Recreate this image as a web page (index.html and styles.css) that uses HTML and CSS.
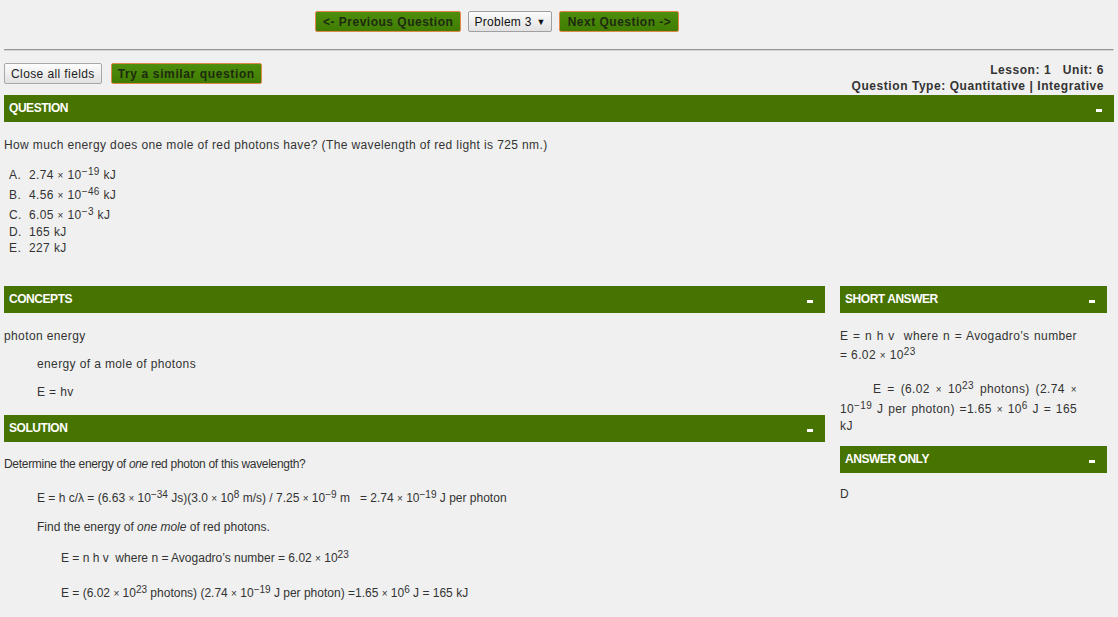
FILE: index.html
```html
<!DOCTYPE html>
<html>
<head>
<meta charset="utf-8">
<link rel="stylesheet" href="styles.css">
</head>
<body>
<div class="page">
  <div class="nav">
    <button class="gbtn">&lt;- Previous Question</button>
    <button class="sel">Problem 3 <span class="arrow">&#9660;</span></button>
    <button class="gbtn next">Next Question -&gt;</button>
  </div>
  <div class="rule"></div>
  <div class="toolbar">
    <div class="tools">
      <button class="btn">Close all fields</button>
      <button class="gbtn try">Try a similar question</button>
    </div>
    <div class="info">
      <div>Lesson: 1&nbsp;&nbsp; Unit: 6</div>
      <div>Question Type: Quantitative | Integrative</div>
    </div>
  </div>

  <section class="panel">
    <div class="phead"><span>QUESTION</span><i class="minus"></i></div>
    <div class="pbody qbody">
      <p class="qtext">How much energy does one mole of red photons have? (The wavelength of red light is 725 nm.)</p>
      <ol class="opts">
        <li><span class="lt">A.</span>2.74 <span class="x">×</span> 10<sup>−19</sup> kJ</li>
        <li><span class="lt">B.</span>4.56 <span class="x">×</span> 10<sup>−46</sup> kJ</li>
        <li><span class="lt">C.</span>6.05 <span class="x">×</span> 10<sup>−3</sup> kJ</li>
        <li><span class="lt">D.</span>165 kJ</li>
        <li><span class="lt">E.</span>227 kJ</li>
      </ol>
    </div>
  </section>

  <div class="cols">
    <div class="left">
      <section class="panel">
        <div class="phead"><span>CONCEPTS</span><i class="minus"></i></div>
        <div class="pbody concepts">
          <p>photon energy</p>
          <p class="in1">energy of a mole of photons</p>
          <p class="in1">E = hv</p>
        </div>
      </section>
      <section class="panel">
        <div class="phead"><span>SOLUTION</span><i class="minus"></i></div>
        <div class="pbody solution">
          <p class="tight">Determine the energy of <em>one</em> red photon of this wavelength?</p>
          <p class="in1 eq">E = h c/λ = (6.63 <span class="x">×</span> 10<sup>−34</sup> Js)(3.0 <span class="x">×</span> 10<sup>8</sup> m/s) / 7.25 <span class="x">×</span> 10<sup>−9</sup> m &nbsp; = 2.74 <span class="x">×</span> 10<sup>−19</sup> J per photon</p>
          <p class="in1">Find the energy of <em>one mole</em> of red photons.</p>
          <p class="in2">E = n h v &nbsp;where n = Avogadro’s number = 6.02 <span class="x">×</span> 10<sup>23</sup></p>
          <p class="in2 last">E = (6.02 <span class="x">×</span> 10<sup>23</sup> photons) (2.74 <span class="x">×</span> 10<sup>−19</sup> J per photon) =1.65 <span class="x">×</span> 10<sup>6</sup> J = 165 kJ</p>
        </div>
      </section>
    </div>
    <div class="right">
      <section class="panel">
        <div class="phead"><span>SHORT ANSWER</span><i class="minus"></i></div>
        <div class="pbody sbody">
          <p>E = n h v &nbsp;where n = Avogadro’s number = 6.02 <span class="x">×</span> 10<sup>23</sup></p>
          <p class="ind">E = (6.02 <span class="x">×</span> 10<sup>23</sup> photons) (2.74 <span class="x">×</span> 10<sup>−19</sup> J per photon) =1.65 <span class="x">×</span> 10<sup>6</sup> J = 165 kJ</p>
        </div>
      </section>
      <section class="panel">
        <div class="phead"><span>ANSWER ONLY</span><i class="minus"></i></div>
        <div class="pbody sbody answer">
          <p>D</p>
        </div>
      </section>
    </div>
  </div>
</div>
</body>
</html>
```

FILE: styles.css
```css
* { box-sizing: border-box; }
html, body { margin: 0; padding: 0; background: #f0f0f0; }
body {
  font-family: "Liberation Sans", Arial, sans-serif;
  font-size: 12px;
  color: #333;
  letter-spacing: 0.38px;
}
.page { padding: 11px 4px 0 4px; }

.nav { display: flex; gap: 7px; padding-left: 311px; height: 21px; }
button { font-family: inherit; cursor: pointer; }
.gbtn {
  height: 21px;
  padding: 0 7px;
  font-size: 12px;
  font-weight: bold;
  color: #1e2a10;
  background: linear-gradient(#4f8e0c, #3f7c02);
  border: 1px solid #e0884a;
  border-radius: 2px;
  letter-spacing: 0.5px;
}
.next { letter-spacing: 0.5px; padding: 0 7px 0 8px; }
.sel {
  height: 21px;
  padding: 0 5px;
  font-size: 12px;
  color: #111;
  background: linear-gradient(#fbfbfb, #e2e2e2);
  border: 1px solid #a0a0a0;
  border-radius: 2px;
  letter-spacing: 0.3px;
}
.sel .arrow { font-size: 9px; margin-left: 1px; position: relative; top: -1px; }

.rule {
  margin-top: 17px;
  height: 2px;
  border-top: 1px solid #949494;
  border-bottom: 1px solid #d6d6d6;
  border-left: 1px solid #bbb;
  border-right: 1px solid #eee;
}

.toolbar { display: flex; justify-content: space-between; align-items: flex-start; margin: 11px 0 1px 0; }
.tools { display: flex; gap: 9px; padding-top: 1px; }
.btn {
  height: 21px;
  padding: 0 6px;
  font-size: 12px;
  color: #222;
  background: linear-gradient(#fdfdfd, #e1e1e1);
  border: 1px solid #a8a8a8;
  border-radius: 2px;
  letter-spacing: 0.4px;
}
.try { padding: 0 6px; letter-spacing: 0.62px; }
.info { text-align: right; font-weight: bold; line-height: 16px; padding-right: 10px; letter-spacing: 0.55px; }

.panel { display: block; }
.phead {
  height: 27px;
  background: #477301;
  color: #fff;
  font-weight: bold;
  font-size: 12px;
  display: flex;
  align-items: center;
  justify-content: space-between;
  padding: 0 12px 2px 5px;
  letter-spacing: -0.45px;
}
.minus { display: block; width: 6px; height: 3px; background: #fff; margin-top: 5px; }

.pbody { padding: 3px 0 2px 0; line-height: 16px; }
.pbody p { margin: 12px 0; }
.pbody p.eq { margin-top: 15px; }
.pbody p.last { margin-top: 15px; }
.concepts { padding-bottom: 3px; }
.qbody { padding: 15px 0 30px 0; }
.qbody .qtext { margin: 0 0 11px 0; }
.opts { list-style: none; margin: 0; padding: 0 0 0 5px; }
.opts li { line-height: 16px; }
.lt { display: inline-block; width: 20px; }
sup { font-size: 10px; vertical-align: 4px; line-height: 16px; }
.x { font-size: 10px; }
.in1 { padding-left: 33px; }
.in2 { padding-left: 57px; }
.solution { letter-spacing: 0; padding-top: 2px; }
.solution .tight { letter-spacing: -0.3px; }

.cols { display: flex; gap: 15px; padding-right: 7px; }
.left { flex: 0 0 821px; }
.right { flex: 1 1 auto; }
.sbody { padding: 3px 30px 2px 0; text-align: justify; }
.sbody p.ind { text-indent: 33px; margin: 14px 0 10px 0; }
.answer { padding-top: 1px; }
```
